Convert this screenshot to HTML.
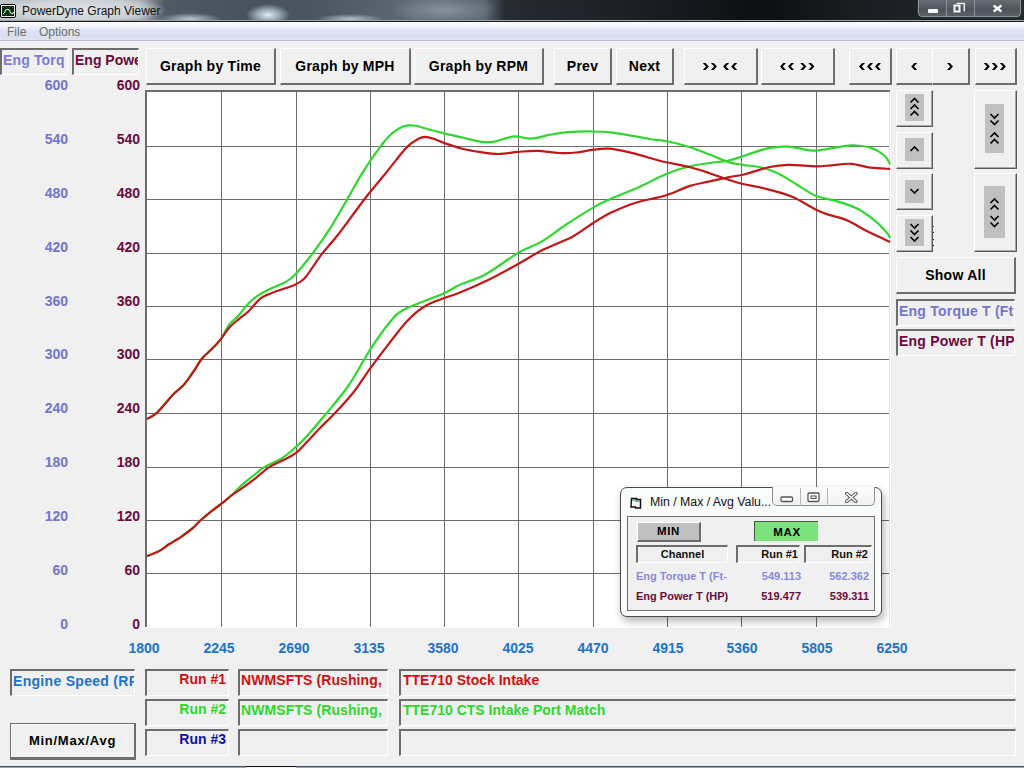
<!DOCTYPE html>
<html><head><meta charset="utf-8">
<style>
*{margin:0;padding:0;box-sizing:border-box}
html,body{width:1024px;height:768px;overflow:hidden;background:#f0f0f0;font-family:"Liberation Sans",sans-serif}
.a{position:absolute}
/* title bar */
#tb{left:0;top:0;width:1024px;height:22px;background:linear-gradient(90deg,#bfc5ca 0px,#a9b1b8 140px,#4f5963 165px,#47515b 260px,#4d5862 330px,#5f6b76 420px,#5a6570 485px,#262b31 505px,#1b1f24 640px,#0c0f12 760px,#1a1e22 860px,#24292e 1024px);border-bottom:1px solid #1a1a1a;box-shadow:inset 0 -1px 0 #a0a6ab}
#tb .glow{left:0;top:0;width:170px;height:20px;background:radial-gradient(ellipse 85px 14px at 82px 10px,rgba(228,232,235,.9),rgba(228,232,235,.55) 70%,rgba(228,232,235,0))}
#tb .t{left:22px;top:4px;font-size:12px;color:#111;white-space:nowrap}
#ico{left:1px;top:4px;width:14px;height:13px;background:#0b1a0b;border:1px solid #f4f4f4;outline:1px solid #111}
.wb{top:0;height:18px;border:1px solid #4a5056;border-top:none;background:linear-gradient(#3c4248,#22272c)}
/* menu */
#mb{left:0;top:22px;width:1024px;height:19px;background:linear-gradient(#fdfdfe 0px,#f4f5fa 3px,#e7eaf5 7px,#dde2f2 9px,#d9dff1 16px,#e2e6f3 18px);border-bottom:1px solid #b8bcc8;box-shadow:0 1px 0 #f4f4f8}
#mb span{position:absolute;top:3px;font-size:12px;color:#6d6d6d}
/* sunken label box */
.sk{border-top:2px solid #6d6d6d;border-left:2px solid #6d6d6d;border-right:1px solid #fff;border-bottom:1px solid #fff;background:#f0f0f0;overflow:hidden;white-space:nowrap;font-weight:bold;font-size:14px}
/* raised button */
.bt{border-top:1px solid #fff;border-left:1px solid #fff;border-right:2px solid #6d6d6d;border-bottom:2px solid #6d6d6d;background:#f0f0f0;font-weight:bold;font-size:14px;color:#000;text-align:center;white-space:nowrap;letter-spacing:0.25px}
.bs{border-right:1px solid #5a5a5a;border-bottom:1px solid #5a5a5a;box-shadow:inset -1px -1px 0 #a8a8a8}
.yl{font-weight:bold;font-size:14px;line-height:16px;text-align:right;width:40px}
.gi{background:#c0c0c0}
.xl{font-weight:bold;font-size:14px;line-height:16px;color:#1c74c8;width:60px;text-align:center}
</style></head><body>
<div id="tb" class="a">
 <div class="a" style="left:0;top:0;width:1024px;height:20px;background:radial-gradient(ellipse 22px 11px at 268px 15px,rgba(235,248,255,.95),rgba(215,235,250,.45) 60%,rgba(220,230,240,0)),radial-gradient(ellipse 32px 6px at 190px 19px,rgba(215,228,240,.8),rgba(220,230,240,0)),radial-gradient(ellipse 34px 5px at 350px 19px,rgba(215,228,240,.75),rgba(220,230,240,0)),radial-gradient(ellipse 55px 14px at 445px 10px,rgba(150,162,172,.7),rgba(140,152,162,0))"></div>
 <div class="a glow"></div>
 <svg class="a" style="left:0;top:4px" width="17" height="14" shape-rendering="crispEdges"><path d="M1 0h14v1h1v12h-1v1h-14v-1h-1v-12h1z" fill="#000"/><rect x="1" y="1" width="14" height="12" fill="#f2f4f2"/><rect x="2" y="2" width="12" height="10" fill="#0a2a0e"/><g fill="#2f6a35"><rect x="3" y="3" width="1" height="1"/><rect x="6" y="3" width="1" height="1"/><rect x="9" y="3" width="1" height="1"/><rect x="12" y="3" width="1" height="1"/><rect x="3" y="10" width="1" height="1"/><rect x="6" y="10" width="1" height="1"/><rect x="9" y="10" width="1" height="1"/><rect x="12" y="10" width="1" height="1"/></g><path d="M3 9h1M4 8h1v-2h1v-1h3v1h1v2h1v1h2v-1h1" fill="none" stroke="#c8f5c8" stroke-width="1" shape-rendering="auto" transform="translate(0 0.5)"/></svg>
 <div class="a t">PowerDyne Graph Viewer</div>
 <div class="a" style="left:917px;top:-1px;width:105px;height:19px;border:1px solid #2c3136;border-radius:0 0 5px 5px;overflow:hidden">
  <div class="a" style="left:0;top:0;width:103px;height:17px;border:1px solid #8a9197;border-top:none;border-radius:0 0 4px 4px;background:linear-gradient(#666d74,#4d545b 60%,#5a6168)"></div>
  <div class="a" style="left:28px;top:0;width:1px;height:17px;background:#8a9197"></div>
  <div class="a" style="left:56px;top:0;width:1px;height:17px;background:#8a9197"></div>
  <div class="a" style="left:10px;top:9px;width:10px;height:4px;background:#f4f6f8;border-radius:1px"></div>
  <svg class="a" style="left:35px;top:2px" width="14" height="12"><path d="M3.6 1.5H11.3V9.2" fill="none" stroke="#e6eaed" stroke-width="1.6"/><rect x="1.5" y="3.5" width="5" height="6" fill="none" stroke="#f4f6f8" stroke-width="2"/></svg>
  <svg class="a" style="left:74px;top:4px" width="12" height="10"><path d="M1.6 1.4L9.4 7.4M9.4 1.4L1.6 7.4" stroke="#f6f8fa" stroke-width="2.5"/></svg>
 </div>
</div>
<div id="mb" class="a"><span style="left:7px">File</span><span style="left:39px">Options</span></div>

<!-- top-left label boxes -->
<div class="a sk" style="left:0;top:48px;width:68px;height:27px;color:#7b7bd8;padding:2px 0 0 1px;letter-spacing:0.15px">Eng Torq</div>
<div class="a sk" style="left:72px;top:48px;width:67px;height:27px;color:#6b0a3c;padding:2px 0 0 1px">Eng Power</div>

<!-- button row -->
<div class="a bt" style="left:146px;top:48px;width:130px;height:37px;line-height:34px">Graph by Time</div>
<div class="a bt" style="left:280px;top:48px;width:131px;height:37px;line-height:34px">Graph by MPH</div>
<div class="a bt" style="left:414px;top:48px;width:130px;height:37px;line-height:34px">Graph by RPM</div>
<div class="a bt" style="left:554px;top:48px;width:58px;height:37px;line-height:34px">Prev</div>
<div class="a bt" style="left:616px;top:48px;width:58px;height:37px;line-height:34px">Next</div>
<div class="a bt" style="left:684px;top:48px;width:74px;height:37px"></div>
<div class="a bt" style="left:761px;top:48px;width:74px;height:37px"></div>
<div class="a bt" style="left:849px;top:48px;width:43px;height:37px"></div>
<div class="a bt" style="left:896px;top:48px;width:38px;height:37px"></div>
<div class="a bt" style="left:932px;top:48px;width:38px;height:37px"></div>
<div class="a bt" style="left:975px;top:48px;width:42px;height:37px"></div>
<svg class="a" style="left:0;top:0" width="1024" height="100"><polygon points="702.8,62.9 705.6,62.9 708.8,66.4 705.6,69.9 702.8,69.9 706.0,66.4"/><polygon points="710.9,62.9 713.7,62.9 716.9,66.4 713.7,69.9 710.9,69.9 714.1,66.4"/><polygon points="729.1,62.9 726.3,62.9 723.1,66.4 726.3,69.9 729.1,69.9 725.9,66.4"/><polygon points="737.2,62.9 734.4,62.9 731.2,66.4 734.4,69.9 737.2,69.9 734.0,66.4"/><polygon points="786.0,62.9 783.2,62.9 780.0,66.4 783.2,69.9 786.0,69.9 782.8,66.4"/><polygon points="794.0,62.9 791.2,62.9 788.0,66.4 791.2,69.9 794.0,69.9 790.8,66.4"/><polygon points="800.3,62.9 803.1,62.9 806.3,66.4 803.1,69.9 800.3,69.9 803.5,66.4"/><polygon points="808.4,62.9 811.2,62.9 814.4,66.4 811.2,69.9 808.4,69.9 811.6,66.4"/><polygon points="865.0,62.9 862.2,62.9 859.0,66.4 862.2,69.9 865.0,69.9 861.8,66.4"/><polygon points="873.0,62.9 870.2,62.9 867.0,66.4 870.2,69.9 873.0,69.9 869.8,66.4"/><polygon points="881.0,62.9 878.2,62.9 875.0,66.4 878.2,69.9 881.0,69.9 877.8,66.4"/><polygon points="917.2,62.9 914.4,62.9 911.2,66.4 914.4,69.9 917.2,69.9 914.0,66.4"/><polygon points="947.0,62.9 949.8,62.9 953.0,66.4 949.8,69.9 947.0,69.9 950.2,66.4"/><polygon points="983.8,62.9 986.6,62.9 989.8,66.4 986.6,69.9 983.8,69.9 987.0,66.4"/><polygon points="991.8,62.9 994.6,62.9 997.8,66.4 994.6,69.9 991.8,69.9 995.0,66.4"/><polygon points="999.8,62.9 1002.6,62.9 1005.8,66.4 1002.6,69.9 999.8,69.9 1003.0,66.4"/></svg>

<!-- CHART -->
<svg class="a" style="left:0;top:0" width="1024" height="768">
<rect x="145" y="90" width="745" height="537" fill="#ffffff"/>
<rect x="221" y="92" width="1" height="535" fill="#6d6d6d"/>
<rect x="296" y="92" width="1" height="535" fill="#6d6d6d"/>
<rect x="370" y="92" width="1" height="535" fill="#6d6d6d"/>
<rect x="444" y="92" width="1" height="535" fill="#6d6d6d"/>
<rect x="518" y="92" width="1" height="535" fill="#6d6d6d"/>
<rect x="593" y="92" width="1" height="535" fill="#6d6d6d"/>
<rect x="667" y="92" width="1" height="535" fill="#6d6d6d"/>
<rect x="741" y="92" width="1" height="535" fill="#6d6d6d"/>
<rect x="816" y="92" width="1" height="535" fill="#6d6d6d"/>
<rect x="145" y="146" width="745" height="1" fill="#6d6d6d"/>
<rect x="145" y="199" width="745" height="1" fill="#6d6d6d"/>
<rect x="145" y="253" width="745" height="1" fill="#6d6d6d"/>
<rect x="145" y="306" width="745" height="1" fill="#6d6d6d"/>
<rect x="145" y="359" width="745" height="1" fill="#6d6d6d"/>
<rect x="145" y="413" width="745" height="1" fill="#6d6d6d"/>
<rect x="145" y="467" width="745" height="1" fill="#6d6d6d"/>
<rect x="145" y="520" width="745" height="1" fill="#6d6d6d"/>
<rect x="145" y="573" width="745" height="1" fill="#6d6d6d"/>
<rect x="145" y="90" width="745" height="2" fill="#6d6d6d"/>
<rect x="145" y="90" width="2" height="537" fill="#6d6d6d"/>
<rect x="889" y="92" width="1" height="535" fill="#e6e6e6"/>
<rect x="890" y="90" width="1" height="538" fill="#ffffff"/>
<rect x="145" y="627" width="746" height="1" fill="#ffffff"/>
<path d="M147.0 556.1 C149.0 555.3 155.2 553.1 158.9 551.1 C162.6 549.1 165.1 546.8 169.0 544.3 C172.9 541.8 178.7 538.5 182.6 535.8 C186.5 533.1 189.6 530.9 192.7 528.2 C195.8 525.5 198.1 522.5 201.2 519.7 C204.3 516.9 207.9 514.0 211.3 511.3 C214.7 508.6 218.1 506.4 221.5 503.7 C224.9 501.0 228.3 498.3 231.7 495.2 C235.1 492.1 237.9 488.5 241.8 485.0 C245.8 481.5 251.5 477.1 255.4 474.0 C259.4 470.9 261.0 469.1 265.5 466.4 C270.0 463.7 277.4 461.1 282.5 457.9 C287.6 454.6 291.9 450.6 296.0 446.9 C300.1 443.2 302.1 441.2 307.0 435.9 C311.9 430.5 318.3 423.2 325.2 414.8 C332.1 406.4 341.2 396.2 348.6 385.5 C356.0 374.8 362.7 361.1 369.7 350.3 C376.7 339.6 385.3 327.6 390.8 321.0 C396.3 314.4 397.4 313.6 402.5 310.5 C407.6 307.4 414.2 305.2 421.2 302.3 C428.2 299.4 438.2 295.8 444.7 292.9 C451.2 290.0 453.1 287.9 460.0 284.8 C466.9 281.7 476.0 279.6 485.8 274.2 C495.6 268.8 509.2 258.1 518.6 252.6 C528.0 247.1 534.2 246.0 542.0 241.4 C549.8 236.8 556.9 230.7 565.5 225.0 C574.1 219.3 586.2 211.7 593.6 207.4 C601.0 203.1 602.6 202.5 610.0 199.2 C617.4 195.9 628.7 191.7 638.1 187.5 C647.5 183.3 657.6 177.4 666.2 173.9 C674.9 170.4 682.8 168.1 690.0 166.3 C697.2 164.5 703.1 164.0 709.6 163.0 C716.1 162.0 723.4 161.7 729.3 160.4 C735.2 159.2 738.5 157.6 745.0 155.5 C751.5 153.4 761.3 149.6 768.5 148.1 C775.7 146.6 781.0 146.3 788.2 146.7 C795.4 147.1 805.8 150.1 811.7 150.6 C817.6 151.1 817.0 150.5 823.5 149.6 C830.0 148.7 843.1 145.6 851.0 145.3 C858.9 145.0 865.1 146.0 870.6 147.7 C876.1 149.4 881.0 152.7 884.3 155.5 C887.6 158.3 889.2 162.9 890.2 164.4" fill="none" stroke="#2fd82f" stroke-width="2.2" stroke-linejoin="round"/>
<path d="M147.0 419.1 C148.6 418.1 153.6 415.6 156.8 412.8 C160.1 410.0 163.6 405.4 166.5 402.1 C169.4 398.9 171.4 396.2 174.3 393.3 C177.2 390.4 180.8 388.2 184.1 384.5 C187.4 380.8 190.9 375.3 193.9 371.0 C196.9 366.7 199.1 362.1 202.0 358.5 C204.9 354.9 208.3 352.6 211.5 349.3 C214.7 346.0 218.3 342.7 221.2 338.6 C224.1 334.5 226.1 328.8 229.0 324.9 C231.9 321.0 235.9 318.4 238.8 315.2 C241.7 311.9 243.7 308.5 246.6 305.4 C249.5 302.3 252.8 299.2 256.4 296.6 C260.0 294.0 263.6 292.1 268.1 289.8 C272.7 287.5 280.1 284.7 283.7 282.9 C287.3 281.1 287.9 280.7 290.0 279.0 C292.1 277.3 292.9 277.1 296.6 272.9 C300.3 268.7 306.6 261.4 312.2 254.0 C317.8 246.6 324.0 237.8 329.9 228.6 C335.8 219.4 342.4 207.5 347.6 198.6 C352.8 189.7 357.0 181.8 360.9 175.4 C364.8 169.0 367.6 164.8 370.9 159.9 C374.2 155.0 377.7 150.2 380.8 146.1 C383.9 142.0 386.0 138.8 389.7 135.5 C393.4 132.2 398.9 128.3 403.0 126.6 C407.1 124.9 409.5 125.0 414.0 125.5 C418.5 126.0 424.8 128.5 430.0 129.8 C435.2 131.2 439.6 132.3 445.0 133.6 C450.4 134.9 456.1 136.1 462.2 137.5 C468.3 138.9 476.2 141.1 481.6 141.8 C487.0 142.5 489.0 142.5 494.4 141.6 C499.8 140.7 507.7 136.9 513.8 136.4 C519.9 135.9 524.9 138.9 531.0 138.6 C537.1 138.3 544.2 135.8 550.3 134.7 C556.4 133.6 560.3 132.6 567.5 132.1 C574.7 131.6 585.8 131.4 593.3 131.5 C600.8 131.6 605.8 131.8 612.6 132.6 C619.4 133.4 627.9 135.1 634.1 136.2 C640.3 137.3 644.3 138.1 650.0 139.0 C655.7 139.9 661.7 140.1 668.4 141.5 C675.1 142.9 683.1 145.1 690.0 147.3 C696.9 149.5 703.1 152.0 709.6 154.5 C716.1 157.0 723.7 160.7 729.3 162.4 C734.9 164.1 737.5 164.0 743.0 164.9 C748.5 165.8 756.7 166.2 762.6 167.7 C768.5 169.1 772.7 170.9 778.3 173.6 C783.9 176.3 789.8 180.3 796.0 184.0 C802.2 187.7 809.1 193.0 815.6 195.8 C822.1 198.6 828.4 198.6 835.3 200.7 C842.2 202.8 850.4 205.2 856.9 208.5 C863.4 211.8 869.6 216.4 874.5 220.3 C879.4 224.2 883.7 229.2 886.3 232.1 C888.9 235.0 889.6 237.0 890.2 238.0" fill="none" stroke="#2fd82f" stroke-width="2.2" stroke-linejoin="round"/>
<path d="M147.0 556.1 C149.0 555.3 155.2 553.1 158.9 551.1 C162.6 549.1 165.1 546.8 169.0 544.3 C172.9 541.8 178.7 538.5 182.6 535.8 C186.5 533.1 189.6 530.9 192.7 528.2 C195.8 525.5 198.1 522.5 201.2 519.7 C204.3 516.9 207.9 514.0 211.3 511.3 C214.7 508.6 218.1 506.4 221.5 503.7 C224.9 501.0 228.3 497.8 231.7 495.2 C235.1 492.6 237.9 491.2 241.8 488.4 C245.8 485.6 250.9 481.8 255.4 478.3 C259.9 474.8 264.4 470.3 268.9 467.3 C273.4 464.3 278.0 462.9 282.5 460.5 C287.0 458.1 291.9 456.0 296.0 452.9 C300.1 449.8 302.9 446.1 307.0 441.9 C311.1 437.7 315.9 432.3 320.5 427.6 C325.1 422.9 329.0 419.5 334.5 413.6 C340.0 407.8 347.4 399.9 353.3 392.5 C359.2 385.1 363.9 377.1 369.7 369.1 C375.5 361.1 382.1 352.4 388.4 344.4 C394.6 336.4 401.3 327.2 407.2 321.0 C413.1 314.8 417.8 310.7 423.6 307.0 C429.5 303.3 436.2 301.2 442.3 298.8 C448.4 296.3 452.4 295.6 460.0 292.5 C467.6 289.4 478.3 284.8 488.1 280.0 C497.9 275.2 509.6 268.6 518.6 263.7 C527.6 258.8 533.0 254.8 542.0 250.3 C551.0 245.8 563.9 241.3 572.5 236.7 C581.1 232.1 587.0 226.8 593.6 222.7 C600.2 218.6 605.3 215.4 612.3 212.1 C619.3 208.8 626.8 205.5 635.8 202.7 C644.8 199.9 657.2 198.0 666.2 195.2 C675.2 192.4 682.8 188.2 690.0 185.9 C697.2 183.6 703.1 182.9 709.6 181.4 C716.1 179.9 723.4 178.3 729.3 177.1 C735.2 175.9 738.5 175.8 745.0 174.2 C751.5 172.6 761.3 168.9 768.5 167.3 C775.7 165.8 780.4 165.1 788.2 164.9 C796.1 164.7 808.4 166.2 815.6 166.3 C822.8 166.4 825.4 165.7 831.3 165.3 C837.2 164.9 844.5 163.4 851.0 163.8 C857.5 164.2 864.1 166.8 870.6 167.7 C877.1 168.5 886.9 168.7 890.2 168.9" fill="none" stroke="#c01818" stroke-width="2.2" stroke-linejoin="round"/>
<path d="M147.0 419.1 C148.6 418.1 153.6 415.6 156.8 412.8 C160.1 410.0 163.6 405.4 166.5 402.1 C169.4 398.9 171.4 396.2 174.3 393.3 C177.2 390.4 180.8 388.2 184.1 384.5 C187.4 380.8 190.9 375.3 193.9 371.0 C196.9 366.7 199.1 362.1 202.0 358.5 C204.9 354.9 208.3 352.6 211.5 349.3 C214.7 346.0 218.3 342.2 221.2 338.6 C224.1 335.0 226.1 331.1 229.0 327.9 C231.9 324.6 235.5 321.9 238.8 319.1 C242.1 316.3 245.0 314.7 248.6 311.2 C252.2 307.8 256.7 301.5 260.3 298.6 C263.9 295.7 266.1 295.3 270.0 293.7 C273.9 292.1 280.4 289.9 283.7 288.8 C287.0 287.7 287.9 287.6 290.0 286.8 C292.1 286.0 294.0 285.5 296.6 283.9 C299.2 282.3 301.4 282.1 305.5 277.3 C309.6 272.5 315.6 262.1 321.0 255.1 C326.4 248.1 332.1 242.2 337.6 235.2 C343.1 228.2 349.2 219.7 354.2 213.0 C359.2 206.3 362.7 201.4 367.5 195.3 C372.3 189.2 378.2 182.4 383.0 176.5 C387.8 170.6 392.2 164.9 396.3 159.9 C400.4 154.9 403.7 150.1 407.4 146.6 C411.1 143.1 415.6 140.4 418.5 138.8 C421.4 137.2 422.7 136.9 425.1 136.8 C427.5 136.8 429.7 137.4 433.0 138.5 C436.3 139.6 440.1 141.6 445.0 143.3 C449.9 145.0 456.5 147.3 462.2 148.7 C467.9 150.1 473.3 151.0 479.4 151.9 C485.5 152.8 492.2 154.0 498.7 154.0 C505.1 154.0 511.7 152.4 518.1 151.9 C524.6 151.4 530.6 150.6 537.4 150.8 C544.2 151.0 552.4 152.7 558.9 153.0 C565.4 153.3 570.4 153.1 576.1 152.5 C581.8 151.9 587.9 150.3 593.3 149.7 C598.7 149.1 602.6 148.3 608.3 148.7 C614.0 149.1 621.5 150.6 627.6 151.9 C633.7 153.2 639.4 154.9 645.0 156.5 C650.6 158.1 654.0 159.4 661.5 161.2 C669.0 163.0 682.0 165.3 690.0 167.3 C698.0 169.3 703.7 171.3 709.6 173.2 C715.5 175.1 719.7 176.9 725.3 178.7 C730.9 180.5 736.5 182.4 743.0 184.0 C749.5 185.6 756.4 186.4 764.6 188.5 C772.8 190.6 783.6 193.2 792.1 196.7 C800.6 200.2 809.7 206.6 815.6 209.5 C821.5 212.4 822.2 212.6 827.4 214.4 C832.6 216.2 840.5 217.5 847.0 220.3 C853.5 223.1 859.5 227.5 866.7 231.1 C873.9 234.7 886.3 240.1 890.2 241.9" fill="none" stroke="#c01818" stroke-width="2.2" stroke-linejoin="round"/>
</svg>
<div class="a yl" style="left:28px;top:77px;color:#7474cc">600</div>
<div class="a yl" style="left:100px;top:77px;color:#6b0a3c">600</div>
<div class="a yl" style="left:28px;top:131px;color:#7474cc">540</div>
<div class="a yl" style="left:100px;top:131px;color:#6b0a3c">540</div>
<div class="a yl" style="left:28px;top:185px;color:#7474cc">480</div>
<div class="a yl" style="left:100px;top:185px;color:#6b0a3c">480</div>
<div class="a yl" style="left:28px;top:239px;color:#7474cc">420</div>
<div class="a yl" style="left:100px;top:239px;color:#6b0a3c">420</div>
<div class="a yl" style="left:28px;top:293px;color:#7474cc">360</div>
<div class="a yl" style="left:100px;top:293px;color:#6b0a3c">360</div>
<div class="a yl" style="left:28px;top:346px;color:#7474cc">300</div>
<div class="a yl" style="left:100px;top:346px;color:#6b0a3c">300</div>
<div class="a yl" style="left:28px;top:400px;color:#7474cc">240</div>
<div class="a yl" style="left:100px;top:400px;color:#6b0a3c">240</div>
<div class="a yl" style="left:28px;top:454px;color:#7474cc">180</div>
<div class="a yl" style="left:100px;top:454px;color:#6b0a3c">180</div>
<div class="a yl" style="left:28px;top:508px;color:#7474cc">120</div>
<div class="a yl" style="left:100px;top:508px;color:#6b0a3c">120</div>
<div class="a yl" style="left:28px;top:562px;color:#7474cc">60</div>
<div class="a yl" style="left:100px;top:562px;color:#6b0a3c">60</div>
<div class="a yl" style="left:28px;top:616px;color:#7474cc">0</div>
<div class="a yl" style="left:100px;top:616px;color:#6b0a3c">0</div>
<div class="a xl" style="left:114px;top:640px">1800</div>
<div class="a xl" style="left:189px;top:640px">2245</div>
<div class="a xl" style="left:264px;top:640px">2690</div>
<div class="a xl" style="left:339px;top:640px">3135</div>
<div class="a xl" style="left:413px;top:640px">3580</div>
<div class="a xl" style="left:488px;top:640px">4025</div>
<div class="a xl" style="left:563px;top:640px">4470</div>
<div class="a xl" style="left:638px;top:640px">4915</div>
<div class="a xl" style="left:712px;top:640px">5360</div>
<div class="a xl" style="left:787px;top:640px">5805</div>
<div class="a xl" style="left:862px;top:640px">6250</div>

<!-- right column -->
<div class="a bt bs" style="left:896px;top:90px;width:37px;height:37px"><div class="a gi" style="left:8px;top:3px;width:19px;height:27px"><svg width="19" height="27"><path d="M5.5 8.5l4-4 4 4M5.5 15l4-4 4 4M5.5 21.5l4-4 4 4" fill="none" stroke="#000" stroke-width="1.6"/></svg></div></div>
<div class="a bt bs" style="left:896px;top:132px;width:37px;height:37px"><div class="a gi" style="left:8px;top:5px;width:19px;height:23px"><svg width="19" height="23"><path d="M5.5 13l4-4 4 4" fill="none" stroke="#000" stroke-width="1.6"/></svg></div></div>
<div class="a bt bs" style="left:896px;top:173px;width:37px;height:37px"><div class="a gi" style="left:8px;top:6px;width:19px;height:23px"><svg width="19" height="23"><path d="M5.5 9l4 4 4-4" fill="none" stroke="#000" stroke-width="1.6"/></svg></div></div>
<div class="a bt bs" style="left:896px;top:215px;width:37px;height:37px"><div class="a gi" style="left:8px;top:3px;width:19px;height:27px"><svg width="19" height="27"><path d="M5.5 5l4 4 4-4M5.5 11.5l4 4 4-4M5.5 18l4 4 4-4" fill="none" stroke="#000" stroke-width="1.6"/></svg></div></div>
<div class="a bt bs" style="left:974px;top:90px;width:43px;height:79px"><div class="a gi" style="left:10px;top:13px;width:19px;height:49px"><svg width="19" height="49"><path d="M5.5 10l4 4 4-4M5.5 16.5l4 4 4-4M5.5 33l4-4 4 4M5.5 39.5l4-4 4 4" fill="none" stroke="#000" stroke-width="1.6"/></svg></div></div>
<div class="a bt bs" style="left:974px;top:173px;width:43px;height:79px"><div class="a gi" style="left:9px;top:12px;width:21px;height:52px"><svg width="21" height="52"><path d="M6.5 17l4-4 4 4M6.5 23.5l4-4 4 4M6.5 30l4 4 4-4M6.5 36.5l4 4 4-4" fill="none" stroke="#000" stroke-width="1.6"/></svg></div></div>
<svg class="a" style="left:932px;top:224px" width="3" height="24" shape-rendering="crispEdges"><rect x="1" y="2" width="1" height="1" fill="#444"/><rect x="1" y="8" width="1" height="1" fill="#333"/><rect x="1" y="15" width="1" height="1" fill="#111"/><rect x="1" y="21" width="1" height="1" fill="#111"/></svg>
<div class="a bt" style="left:896px;top:257px;width:120px;height:37px;line-height:34px">Show All</div>
<div class="a sk" style="left:896px;top:299px;width:119px;height:27px;color:#7474cc;padding:2px 0 0 1px;letter-spacing:0.22px">Eng Torque T (Ft-lb)</div>
<div class="a sk" style="left:896px;top:329px;width:119px;height:27px;color:#6b0a3c;padding:2px 0 0 1px;letter-spacing:0.2px">Eng Power T (HP)</div>

<!-- bottom runs -->
<div class="a sk" style="left:145px;top:669px;width:84px;height:27px;color:#d01010;text-align:right;padding:0 2px 0 0">Run #1</div>
<div class="a sk" style="left:145px;top:699px;width:84px;height:27px;color:#2cd82c;text-align:right;padding:0 2px 0 0">Run #2</div>
<div class="a sk" style="left:145px;top:729px;width:84px;height:27px;color:#1010a0;text-align:right;padding:0 2px 0 0">Run #3</div>
<div class="a sk" style="left:238px;top:669px;width:150px;height:27px;color:#d01010;padding:1px 0 0 1px;letter-spacing:0.1px">NWMSFTS (Rushing,</div>
<div class="a sk" style="left:238px;top:699px;width:150px;height:27px;color:#2cd82c;padding:1px 0 0 1px;letter-spacing:0.1px">NWMSFTS (Rushing,</div>
<div class="a sk" style="left:238px;top:729px;width:150px;height:27px"></div>
<div class="a sk" style="left:399px;top:669px;width:617px;height:27px;color:#d01010;padding:1px 0 0 2px">TTE710 Stock Intake</div>
<div class="a sk" style="left:399px;top:699px;width:617px;height:27px;color:#2cd82c;padding:1px 0 0 2px">TTE710 CTS Intake Port Match</div>
<div class="a sk" style="left:399px;top:729px;width:617px;height:27px"></div>

<!-- dialog -->
<div class="a" id="dlg" style="left:620px;top:487px;width:262px;height:130px;border:1px solid #4a4a4a;border-radius:7px;background:#fafbfb;box-shadow:2px 4px 9px rgba(0,0,0,.3)">
 <svg class="a" style="left:9px;top:9px" width="14" height="13"><path d="M1.5 1.5h5v1h4v8.5h-5v-1h-4.5z" fill="#f4f4f4" stroke="#111" stroke-width="1.4"/><path d="M2 3h4.5M5 4.2h5" stroke="#2a8a7a" stroke-width="1"/></svg>
 <div class="a" style="left:29px;top:7px;font-size:12.3px;color:#111;white-space:nowrap">Min / Max / Avg Valu...</div>
 <div class="a" style="left:151px;top:-1px;width:103px;height:19px;border:1px solid #8d9196;border-top:none;border-radius:0 0 5px 5px;background:linear-gradient(#fdfdfd,#f0f1f2)"></div>
 <div class="a" style="left:179px;top:0;width:1px;height:18px;background:#b4b8bc"></div>
 <div class="a" style="left:206px;top:0;width:1px;height:18px;background:#b4b8bc"></div>
 <svg class="a" style="left:159px;top:8px" width="14" height="7"><rect x="1" y="1" width="11.5" height="4.5" rx="1" fill="#fff" stroke="#555" stroke-width="1.3"/></svg>
 <svg class="a" style="left:186px;top:4px" width="14" height="11"><rect x="1" y="1" width="11" height="8.5" rx="1" fill="#fff" stroke="#555" stroke-width="1.3"/><rect x="4" y="4" width="5" height="2.5" fill="#fff" stroke="#555" stroke-width="1.1"/></svg>
 <svg class="a" style="left:224px;top:4px" width="13" height="11"><path d="M1.8 1.5L10.8 9.5M10.8 1.5L1.8 9.5" stroke="#555" stroke-width="3.6" stroke-linecap="round"/><path d="M1.8 1.5L10.8 9.5M10.8 1.5L1.8 9.5" stroke="#fff" stroke-width="1.6" stroke-linecap="round"/></svg>
 <div class="a" style="left:6px;top:28px;width:248px;height:95px;border:1px solid #6d6d6d;background:#f0f0f0">
  <div class="a" style="left:9px;top:5px;width:64px;height:20px;background:#c0c0c0;border-top:1px solid #fff;border-left:1px solid #fff;border-right:2px solid #6d6d6d;border-bottom:2px solid #6d6d6d;font-weight:bold;font-size:11.5px;text-align:center;line-height:17px;letter-spacing:0.6px">MIN</div>
  <div class="a" style="left:126px;top:4px;width:64px;height:20px;background:#7ce27c;border-top:1px solid #3d5a3d;border-left:1px solid #3d5a3d;font-weight:bold;font-size:11.5px;text-align:center;line-height:20px;letter-spacing:0.6px;padding-left:1px">MAX</div>
  <div class="a sk" style="left:8px;top:28px;width:92px;height:18px;font-size:11px;text-align:center;line-height:15px;color:#111">Channel</div>
  <div class="a sk" style="left:108px;top:28px;width:64px;height:18px;font-size:11px;text-align:right;line-height:15px;padding-right:1px;color:#111">Run #1</div>
  <div class="a sk" style="left:176px;top:28px;width:68px;height:18px;font-size:11px;text-align:right;line-height:15px;padding-right:3px;color:#111">Run #2</div>
  <div class="a" style="left:8px;top:53px;font-size:11px;font-weight:bold;color:#8a8ad8;white-space:nowrap">Eng Torque T (Ft-</div>
  <div class="a" style="left:8px;top:73px;font-size:11px;font-weight:bold;color:#6b0a3c;white-space:nowrap">Eng Power T (HP)</div>
  <div class="a" style="left:103px;top:53px;width:70px;text-align:right;font-size:11px;font-weight:bold;color:#8a8ad8">549.113</div>
  <div class="a" style="left:171px;top:53px;width:70px;text-align:right;font-size:11px;font-weight:bold;color:#8a8ad8">562.362</div>
  <div class="a" style="left:103px;top:73px;width:70px;text-align:right;font-size:11px;font-weight:bold;color:#6b0a3c">519.477</div>
  <div class="a" style="left:171px;top:73px;width:70px;text-align:right;font-size:11px;font-weight:bold;color:#6b0a3c">539.311</div>
 </div>
</div>

<!-- bottom -->
<div class="a sk" style="left:10px;top:669px;width:125px;height:27px;color:#1c74c8;padding:2px 0 0 1px;letter-spacing:0.3px">Engine Speed (RPM)</div>
<div class="a bt" style="left:10px;top:723px;width:126px;height:37px;line-height:33px;font-size:13px;letter-spacing:0.75px;border:1px solid #6d6d6d;border-right:2px solid #6d6d6d;border-bottom:3px solid #6d6d6d;box-shadow:inset 1px 1px 0 #fff">Min/Max/Avg</div>
<div class="a" style="left:0;top:766px;width:1024px;height:1px;background:#4a5462"></div>
<div class="a" style="left:0;top:767px;width:1024px;height:1px;background:#98a3b2"></div>
<div class="a" style="left:246px;top:766px;width:50px;height:1px;background:#111"></div>
<div class="a" style="left:246px;top:767px;width:50px;height:1px;background:#f4f4f4"></div>
</body></html>
